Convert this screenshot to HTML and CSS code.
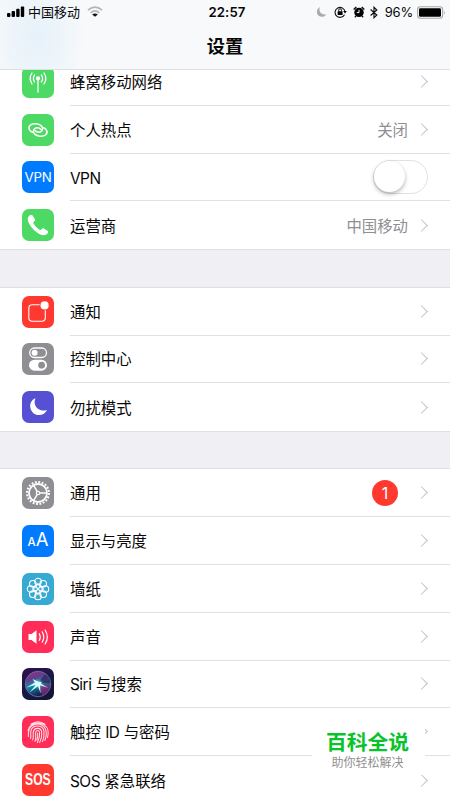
FILE: index.html
```html
<!DOCTYPE html>
<html lang="zh-CN">
<head>
<meta charset="utf-8">
<title>设置</title>
<link rel="stylesheet" href="styles.css">
</head>
<body>
<div class="screen">
  <header class="top">
    <div class="status">
      <div class="carrier">
        <svg width="18" height="12" viewBox="0 0 18 12"><rect x="0" y="7" width="3.4" height="4" rx="1"/><rect x="4.6" y="5" width="3.4" height="6" rx="1"/><rect x="9.2" y="2.8" width="3.4" height="8.2" rx="1"/><rect x="13.8" y=".6" width="3.4" height="10.4" rx="1"/></svg>
        <span>中国移动</span>
        <svg class="wifi" width="16" height="12" viewBox="0 0 16 12" fill="none" stroke="#b3b5b8" stroke-width="1.7"><path d="M1 4.2Q8-2 15 4.2"/><path d="M3.7 6.8Q8 3 12.3 6.8"/><path d="M8 10.8 5.2 8.4Q8 6.6 10.8 8.4Z" fill="#111" stroke="none"/></svg>
      </div>
      <time class="clock">22:57</time>
      <div class="indicators">
        <svg class="moon" width="11" height="12" viewBox="0 0 11 12"><path d="M4 1C-.8 3.2.2 10.8 5.7 10.8c2 0 3.8-1 4.5-2.6C5.6 9.5 2 5.600 4 1Z" fill="#aaa"/></svg>
        <svg class="lock" width="13" height="12" viewBox="0 0 13 12"><path d="M10.5 8.700A5 5 0 1 1 11 5.500" fill="none" stroke="#111" stroke-width="1.100"/><path d="M9.200 5h3.600L11 7.500Z"/><rect x="3.600" y="5.300" width="5" height="3.600" rx=".4"/><path d="M4.700 5.500V4.200a1.400 1.400 0 0 1 2.800 0v1.300" fill="none" stroke="#111"/></svg>
        <svg class="alarm" width="12" height="12" viewBox="0 0 12 12"><circle cx="6" cy="6.400" r="4.700"/><path d="M.7 3.500 3.300 1M11.300 3.500 8.700 1M3 10l-1 1.300M9 10l1 1.300" stroke="#111" stroke-width="1.500"/><path d="M6 3.800v2.800H3.800" fill="none" stroke="#fff"/></svg>
        <svg class="bt" width="8" height="13" viewBox="0 0 8 13"><path d="M.6 3.500 6.800 9 4 11.700V1.300L6.800 4 .6 9.500" fill="none" stroke="#111" stroke-width="1.200"/></svg>
        <span class="percent">96%</span>
        <svg class="battery" width="29" height="13" viewBox="0 0 29 13"><rect x=".6" y=".8" width="25" height="11.400" rx="2.600" fill="#fafafa" stroke="#a8a8a8" stroke-width="1.100"/><rect x="2" y="2.200" width="22" height="8.600" rx="1.300"/><path d="M26.900 4.500q1.600 2 0 4Z" fill="#a8a8a8"/></svg>
      </div>
    </div>
    <h1 class="title">设置</h1>
  </header>

  <main class="list">
    <section class="group first">
      <div class="row"><span class="icon green"><svg viewBox="0 0 32 32" fill="none" stroke="#fff" stroke-width="1.300" stroke-linecap="round"><circle cx="16" cy="12.300" r="1.500" fill="#fff"/><path d="M16 13.500V26M12.600 16Q10.200 12.300 12.600 8.800M19.400 16Q21.800 12.300 19.400 8.800M10 18Q6.400 12.300 10 7M22 18Q25.600 12.300 22 7"/></svg></span><div class="cell"><span class="label">蜂窝移动网络</span><i class="chevron"></i></div></div>
      <div class="row"><span class="icon green"><svg viewBox="0 0 32 32" fill="none" stroke="#fff" stroke-width="1.500" stroke-linecap="round"><path d="M11.300 18.500C7 17.500 5.600 13.300 8.500 11c2.700-2 8.500-1.400 10.800.9 2.600 2.600.9 6.300-2.200 6.300-2 0-3.300-.7-4-1.700"/><path d="M20.700 13.500c4.300 1 5.700 5.200 2.800 7.500-2.700 2-8.500 1.400-10.800-.9-2.600-2.600-.9-6.300 2.200-6.300 2 0 3.300.7 4 1.700"/></svg></span><div class="cell"><span class="label">个人热点</span><span class="value">关闭</span><i class="chevron"></i></div></div>
      <div class="row"><span class="icon blue vpn">VPN</span><div class="cell"><span class="label latin">VPN</span><span class="switch"></span></div></div>
      <div class="row"><span class="icon green"><svg viewBox="0 0 32 32" fill="#fff"><path d="M7.300 6.700C8.800 5.500 10 5.600 10.800 6.700l2 3.300c.7 1.200.2 1.900-.7 2.600-1 .8-1 1.400-.3 2.500 1.500 2.300 3.200 4 5.300 5.400 1.200.8 1.700.7 2.500-.2.800-1 1.600-1.300 2.700-.6l3 2c1 .8 1.100 1.700.1 2.900-1.600 1.900-4 2.200-6.900.9C12.900 22.800 8.300 18 6.200 12.500c-.9-2.500-.6-4.500 1.100-5.800Z"/></svg></span><div class="cell"><span class="label">运营商</span><span class="value">中国移动</span><i class="chevron"></i></div></div>
    </section>

    <section class="group second">
      <div class="row"><span class="icon red"><svg viewBox="0 0 32 32"><rect x="6.800" y="8.800" width="16.500" height="16.500" rx="3.500" fill="none" stroke="#fff" stroke-width="1.100"/><circle cx="22.600" cy="9.400" r="5" fill="#ff3830"/><circle cx="22.600" cy="9.400" r="4.100" fill="#fff"/></svg></span><div class="cell"><span class="label">通知</span><i class="chevron"></i></div></div>
      <div class="row"><span class="icon gray"><svg viewBox="0 0 32 32"><rect x="7.700" y="5" width="16.800" height="9.500" rx="4.750" fill="none" stroke="#fff" stroke-width="1.300"/><circle cx="12.600" cy="9.800" r="3" fill="#fff"/><rect x="7" y="16.700" width="18" height="11" rx="5.500" fill="#fff"/><circle cx="19.600" cy="22.200" r="3.400" fill="#8e8e93"/></svg></span><div class="cell"><span class="label">控制中心</span><i class="chevron"></i></div></div>
      <div class="row"><span class="icon purple"><svg viewBox="0 0 32 32"><path d="M13.500 7.200C10 8.600 8 11.800 8.200 15.400c.3 4.900 4.100 8.600 8.900 8.600 3.500 0 6.600-2 8-5.100-5 1.700-9.400.1-11.500-3.800-1.300-2.500-1.300-5.200-.1-7.900Z" fill="#fff"/></svg></span><div class="cell"><span class="label">勿扰模式</span><i class="chevron"></i></div></div>
    </section>

    <section class="group third">
      <div class="row"><span class="icon gray"><svg viewBox="0 0 32 32" fill="none" stroke="#fff"><circle cx="16" cy="16" r="11" stroke-width="2" stroke-dasharray="1.900 1.556"/><circle cx="16" cy="16" r="9" stroke-width="1.800"/><circle cx="16" cy="16" r="1.700" stroke-width="1.200"/><path d="M17.800 16H25M15.100 14.400 11.500 8.200M15.100 17.600 11.500 23.800" stroke-width="1.500"/></svg></span><div class="cell"><span class="label">通用</span><span class="badge">1</span><i class="chevron"></i></div></div>
      <div class="row"><span class="icon blue letters"><span class="small-a">A</span><span class="big-a">A</span></span><div class="cell"><span class="label">显示与亮度</span><i class="chevron"></i></div></div>
      <div class="row"><span class="icon teal"><svg viewBox="0 0 32 32" fill="none" stroke="#fff" stroke-width="1.100"><circle cx="16" cy="8.600" r="3.300"/><circle cx="21.200" cy="10.800" r="3.300"/><circle cx="23.400" cy="16" r="3.300"/><circle cx="21.200" cy="21.200" r="3.300"/><circle cx="16" cy="23.400" r="3.300"/><circle cx="10.800" cy="21.200" r="3.300"/><circle cx="8.600" cy="16" r="3.300"/><circle cx="10.800" cy="10.800" r="3.300"/><g stroke-width=".9"><ellipse cx="16" cy="13.200" rx="1.500" ry="2.700"/><ellipse cx="16" cy="18.800" rx="1.500" ry="2.700"/><ellipse cx="13.200" cy="16" rx="2.700" ry="1.500"/><ellipse cx="18.800" cy="16" rx="2.700" ry="1.500"/><path d="m12.500 12.500 7 7M19.500 12.500l-7 7"/></g></svg></span><div class="cell"><span class="label">墙纸</span><i class="chevron"></i></div></div>
      <div class="row"><span class="icon pink"><svg viewBox="0 0 32 32" fill="none" stroke="#fff" stroke-width="1.200" stroke-linecap="round"><path d="M6.500 13h3l5-3.700v13.400l-5-3.700h-3Z" fill="#fff" stroke="none"/><path d="M17.300 12.700q1.900 3.300 0 6.600M20.200 10.800q3.200 5.200 0 10.400M23.100 9q4.500 7 0 14"/></svg></span><div class="cell"><span class="label">声音</span><i class="chevron"></i></div></div>
      <div class="row"><span class="icon siri"><svg viewBox="0 0 32 32"><defs><linearGradient id="orb" x1="0" y1="0" x2=".4" y2="1"><stop offset="0" stop-color="#99307f"/><stop offset=".35" stop-color="#663c8c"/><stop offset=".58" stop-color="#168ea8"/><stop offset="1" stop-color="#141b55"/></linearGradient><radialGradient id="glow"><stop offset="0" stop-color="#fff"/><stop offset=".3" stop-color="#8ff6f4" stop-opacity=".6"/><stop offset="1" stop-color="#3bbdd2" stop-opacity="0"/></radialGradient></defs><circle cx="16" cy="16" r="12.700" fill="url(#orb)" stroke="#72729c" stroke-width=".9"/><path d="M16 15 23 6q5 3 5.500 9Z" fill="#3b1c59" opacity=".75"/><path d="M17 16 28 17q-1 8-8 11Z" fill="#b12880" opacity=".55"/><circle cx="16" cy="16" r="6" fill="url(#glow)"/><path d="M4.500 19.500 13 14.600 10.500 11 16.500 13.800 20 14 18.500 15.600 26 19.800 18 17.300 18.600 25.500 16 18 7.500 24.500 14 16.800Z" fill="#d8ffff"/></svg></span><div class="cell"><span class="label"><span class="latin">Siri</span> 与搜索</span><i class="chevron"></i></div></div>
      <div class="row"><span class="icon pink"><svg viewBox="0 0 32 32" fill="none" stroke="#ffe3e9" stroke-width="1.050" stroke-linecap="round"><path d="M9 8.200q7-5 14 0M6 14.500C8 4.500 24 4.500 26 14.500c.4 2.500.2 5-.5 7M6.400 20.500C5.500 8.500 14 7.800 16 7.900c5.500.2 9.200 5 8 12.500q-.4 2.500-1.200 4M8.600 22.500c.7-2.500-.3-4.500.3-7.500 1.400-6.600 11.900-6.800 13.100.3.400 4-.2 7.300-1.600 10.300M10.700 24c1.400-3.500 0-6 .7-8.500 1.200-4.200 7.400-4.200 8.300.3.500 4-.4 7.600-2 10.700M13 25.500c1.600-3.400.2-7 .7-9.300.6-2.400 3.600-2.200 3.900.2.400 3.500-.5 7-2.200 10.200M15.700 17q.3 4-.9 7"/></svg></span><div class="cell"><span class="label">触控 <span class="latin">ID</span> 与密码</span><i class="chevron"></i></div></div>
      <div class="row"><span class="icon red"><span class="sos">SOS</span></span><div class="cell"><span class="label"><span class="latin">SOS</span> 紧急联络</span><i class="chevron"></i></div></div>
    </section>
  </main>

  <aside class="watermark"><strong>百科全说</strong><span>助你轻松解决</span></aside>
</div>
</body>
</html>
```
FILE: styles.css
```css
* { box-sizing: border-box; }
body { margin: 0; background: #fff; }
.screen {
  position: relative;
  width: 450px;
  height: 800px;
  overflow: hidden;
  background: #efeff4;
  color: #080808;
  font-family: Inter, "Noto Sans CJK SC", sans-serif;
  font-size: 15.4px;
}
.top {
  position: relative;
  z-index: 1;
  height: 70px;
  border-bottom: 1px solid #dcdee1;
  background: radial-gradient(ellipse 50px 70px at 36px 38px, #e6f1fa 0, #edf5fa 50%, rgba(248, 249, 250, 0) 100%), #f8f9fa;
}
.status {
  display: grid;
  grid-template-columns: 1fr auto 1fr;
  align-items: center;
  height: 24px;
  padding: 0 4px 0 7px;
}
.carrier, .indicators { display: flex; align-items: center; font-size: 13px; line-height: 20px; }
.carrier span { margin-left: 3px; }
.wifi { margin-left: 7px; }
.clock { padding-left: 1px; font-size: 13.2px; font-weight: 600; letter-spacing: .1px; }
.indicators { justify-content: flex-end; }
.lock { margin-left: 7px; }
.alarm { margin-left: 6px; }
.bt { margin-left: 5px; }
.percent { margin-left: 7px; letter-spacing: -.2px; }
.battery { margin-left: 4px; }
.title { margin: 9px 0 0; font-size: 18.3px; line-height: 26px; font-weight: 600; text-align: center; }
.list { margin-top: -12px; }
.group { background: #fff; box-shadow: 0 0 0 1px #dfdfe3; }
.second { margin-top: 38.6px; }
.third { margin-top: 38px; }
.row { display: flex; align-items: center; height: 47.8px; padding-left: 22px; }
.third .row { height: 47.85px; }
.icon {
  display: flex;
  flex: none;
  align-items: center;
  justify-content: center;
  width: 32px;
  height: 32px;
  margin-right: 16px;
  border-radius: 7px;
  overflow: hidden;
  color: #fff;
}
.icon svg { width: 32px; height: 32px; }
.green { background: #4cd964; }
.blue { background: #007aff; }
.red { background: #ff3830; }
.gray { background: #8e8e93; }
.purple { background: #5651d3; }
.teal { background: #37aad4; }
.pink { background: #ff2d57; }
.siri { background: linear-gradient(150deg, #30104b, #161a48 55%, #10152f); }
.vpn { font-size: 13.3px; letter-spacing: -.3px; }
.sos { font: bold 16px/32px "Liberation Sans", sans-serif; transform: scaleX(.76); }
.letters { align-items: baseline; line-height: 29px; }
.small-a { font-size: 11.5px; font-weight: 500; }
.big-a { font-size: 18.5px; }
.cell {
  display: flex;
  flex: 1;
  align-items: center;
  align-self: stretch;
  padding-right: 24px;
  border-bottom: 1px solid #e1e1e3;
}
.row:last-child .cell { border-bottom: 0; }
.label { flex: 1; line-height: 22px; padding-top: 3px; }
.first .label { padding-top: 4px; }
.latin { letter-spacing: -.5px; }
.value { margin-right: 9px; padding-top: 4px; line-height: 22px; color: #8e8e93; }
.chevron {
  width: 9px;
  height: 9px;
  border-top: 1.8px solid #c3c3c8;
  border-right: 1.8px solid #c3c3c8;
  transform: rotate(45deg);
}
.switch {
  display: flex;
  width: 55px;
  height: 34px;
  margin-right: -2px;
  border: 1.6px solid #e1e1e3;
  border-radius: 17px;
}
.switch::before {
  content: "";
  width: 31px;
  height: 31px;
  border-radius: 50%;
  background: #fff;
  box-shadow: 0 2px 4px rgba(0, 0, 0, .3);
}
.badge {
  width: 26px;
  height: 26px;
  margin-right: 19px;
  border-radius: 50%;
  background: #ff3830;
  color: #fff;
  font-size: 16px;
  line-height: 26px;
  text-align: center;
}
.watermark {
  position: absolute;
  z-index: 2;
  left: 312px;
  top: 724px;
  display: flex;
  flex-direction: column;
  align-items: center;
  width: 113px;
  height: 51px;
  padding-right: 2px;
  background: #fff;
}
.watermark strong { margin-top: 6px; color: #09c32b; font-size: 20.8px; line-height: 26px; }
.watermark span { color: #8f8f8f; font-size: 12px; line-height: 14px; }
```
